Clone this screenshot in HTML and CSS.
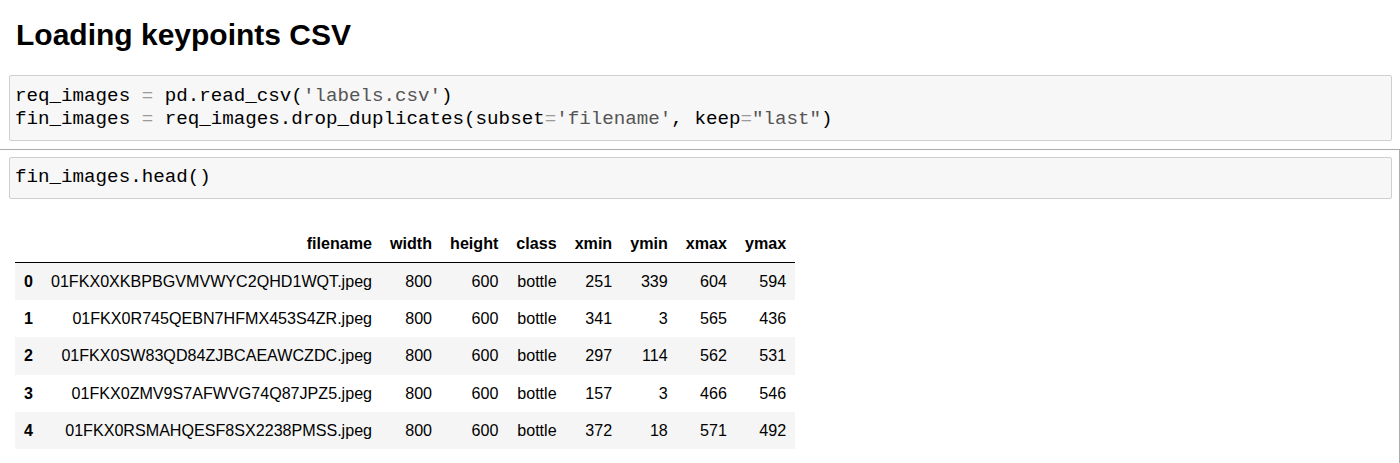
FILE: index.html
```html
<!DOCTYPE html>
<html>
<head>
<meta charset="utf-8">
<link rel="stylesheet" href="styles.css">
</head>
<body>
<div class="cell md-cell">
  <h2 class="heading">Loading keypoints CSV</h2>
</div>
<div class="cell code-cell">
  <div class="input"><pre class="code">req_images <span class="op">=</span> pd.read_csv(<span class="str">'labels.csv'</span>)
fin_images <span class="op">=</span> req_images.drop_duplicates(subset<span class="op">=</span><span class="str">'filename'</span>, keep<span class="op">=</span><span class="str">"last"</span>)</pre></div>
</div>
<div class="cell code-cell selected">
  <div class="input"><pre class="code">fin_images.head()</pre></div>
  <div class="output">
    <table class="df">
      <thead>
        <tr><th></th><th>filename</th><th>width</th><th>height</th><th>class</th><th>xmin</th><th>ymin</th><th>xmax</th><th>ymax</th></tr>
      </thead>
      <tbody>
        <tr><th>0</th><td>01FKX0XKBPBGVMVWYC2QHD1WQT.jpeg</td><td>800</td><td>600</td><td>bottle</td><td>251</td><td>339</td><td>604</td><td>594</td></tr>
        <tr><th>1</th><td>01FKX0R745QEBN7HFMX453S4ZR.jpeg</td><td>800</td><td>600</td><td>bottle</td><td>341</td><td>3</td><td>565</td><td>436</td></tr>
        <tr><th>2</th><td>01FKX0SW83QD84ZJBCAEAWCZDC.jpeg</td><td>800</td><td>600</td><td>bottle</td><td>297</td><td>114</td><td>562</td><td>531</td></tr>
        <tr><th>3</th><td>01FKX0ZMV9S7AFWVG74Q87JPZ5.jpeg</td><td>800</td><td>600</td><td>bottle</td><td>157</td><td>3</td><td>466</td><td>546</td></tr>
        <tr><th>4</th><td>01FKX0RSMAHQESF8SX2238PMSS.jpeg</td><td>800</td><td>600</td><td>bottle</td><td>372</td><td>18</td><td>571</td><td>492</td></tr>
      </tbody>
    </table>
  </div>
</div>
</body>
</html>
```
FILE: styles.css
```css
html, body {
  margin: 0;
  padding: 0;
  background: #ffffff;
  overflow: hidden;
}
body {
  font-family: "Liberation Sans", Arial, Helvetica, sans-serif;
  color: #000;
}
.cell {
  box-sizing: border-box;
}
.md-cell {
  padding: 17px 0 0 16px;
  height: 70px;
}
.heading {
  margin: 0;
  font-size: 30px;
  line-height: 36px;
  font-weight: bold;
}
.code-cell {
  padding: 5px 8px 5px 9px;
}
.selected {
  margin-top: 3px;
  border-top: 1px solid #ababab;
  border-right: 1px solid #ababab;
  padding-top: 7px;
  padding-right: 7px;
  min-height: 320px;
}
.input {
  background: #f7f7f7;
  border: 1px solid #cfcfcf;
  border-radius: 2px;
}
.code {
  margin: 0;
  padding: 8.5px 6px 8px 5px;
  font-family: "Liberation Mono", "Courier New", monospace;
  font-size: 19.2px;
  line-height: 23.5px;
  color: #000;
  white-space: pre;
}
.op {
  color: #9a9a9a;
}
.str {
  color: #555555;
}
.output {
  padding: 26px 0 0 6px;
}
.df {
  border-collapse: collapse;
  border: none;
  font-size: 16.1px;
}
.df th,
.df td {
  text-align: right;
  vertical-align: middle;
  padding: 8px 9px;
  line-height: 21.25px;
  white-space: nowrap;
  border: none;
}
.df thead th {
  font-weight: bold;
  border-bottom: 1px solid #000;
}
.df tbody th {
  font-weight: bold;
}
.df tbody tr:nth-child(odd) {
  background: #f5f5f5;
}
```
